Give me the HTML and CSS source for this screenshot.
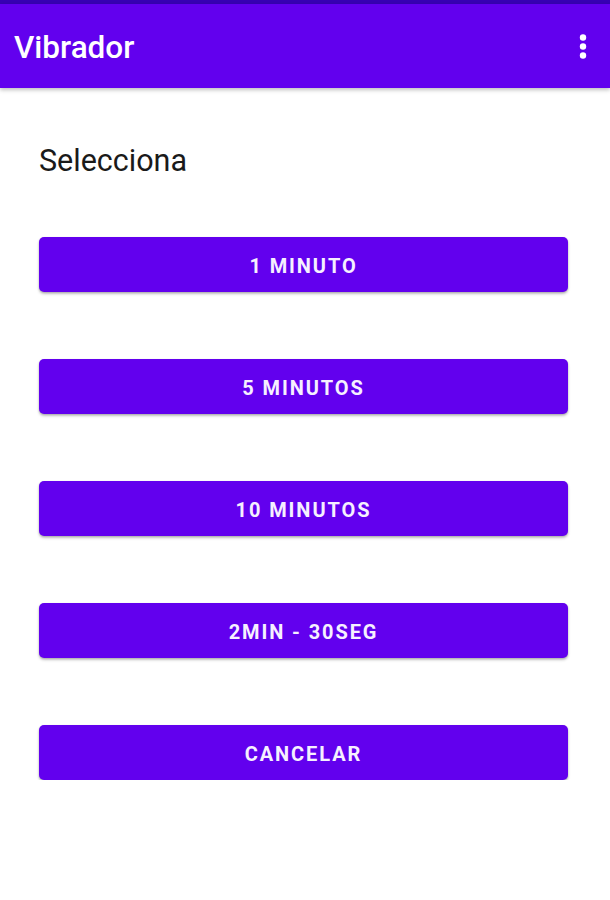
FILE: index.html
```html
<!DOCTYPE html>
<html lang="es">
<head>
<meta charset="utf-8">
<title>Vibrador</title>
<link rel="stylesheet" href="styles.css">
</head>
<body>
<div class="status"></div>
<header class="toolbar">
  <h1 class="title">Vibrador</h1>
  <div class="menu" aria-label="Más opciones">
    <svg width="8" height="28" viewBox="0 0 8 28"><circle cx="4" cy="4.5" r="3.2" fill="#fff"/><circle cx="4" cy="13.5" r="3.2" fill="#fff"/><circle cx="4" cy="22.5" r="3.2" fill="#fff"/></svg>
  </div>
</header>
<main class="content">
  <p class="heading">Selecciona</p>
  <div class="buttons">
    <button class="btn">1 MINUTO</button>
    <button class="btn">5 MINUTOS</button>
    <button class="btn">10 MINUTOS</button>
    <button class="btn">2MIN - 30SEG</button>
    <button class="btn">CANCELAR</button>
  </div>
</main>
</body>
</html>
```
FILE: styles.css
```css
html, body {
  margin: 0;
  padding: 0;
  background: #ffffff;
  font-family: Roboto, "Noto Sans", sans-serif;
}
.status {
  height: 4px;
  background: #3700B3;
}
.toolbar {
  height: 84px;
  background: #6200EE;
  display: flex;
  align-items: center;
  justify-content: space-between;
  padding: 0 23px 0 14px;
  box-shadow: 0 2px 4px rgba(0,0,0,0.25);
  position: relative;
}
.title {
  margin: 4px 0 0 0;
  color: #ffffff;
  font-size: 31.5px;
  font-weight: 500;
  line-height: 36px;
}
.menu {
  display: flex;
  align-items: center;
  margin-top: 1px;
}
.menu svg { display: block; }
.content {
  padding: 55px 42px 0 39px;
}
.heading {
  margin: 0 0 58px 0;
  font-size: 30.5px;
  line-height: 36px;
  color: #1a1a1a;
}
.buttons {
  display: flex;
  flex-direction: column;
  gap: 67px;
}
.btn {
  height: 55px;
  border: none;
  border-radius: 5px;
  background: #6200EE;
  color: #f6f0ff;
  font-family: Roboto, "Noto Sans", sans-serif;
  font-weight: 700;
  font-size: 20px;
  letter-spacing: 1.9px;
  box-shadow: 0 2px 3px rgba(0,0,0,0.22), 0 1px 2px rgba(0,0,0,0.15);
  padding: 3px 0 0 0;
}
```
